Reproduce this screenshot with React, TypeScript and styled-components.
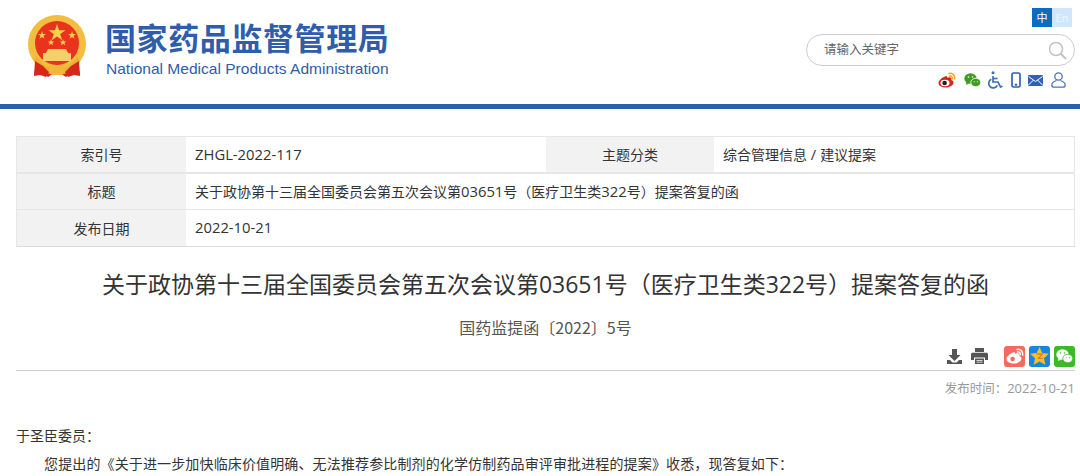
import React from "react";
import styled, { createGlobalStyle } from "styled-components";

const GlobalStyle = createGlobalStyle`
  html, body {
    margin: 0;
    padding: 0;
    background: #fff;
    overflow: hidden;
  }
  body {
    font-family: "Liberation Sans", "Noto Sans CJK SC", sans-serif;
    color: #333;
    text-spacing-trim: space-all;
  }
`;

const cjk = `"Noto Sans CJK SC", sans-serif`;

const Page = styled.div`
  width: 1080px;
  height: 476px;
  overflow: hidden;
`;

const Header = styled.header`
  height: 104px;
  border-bottom: 5px solid #2f5cab;
  display: flex;
  justify-content: space-between;
`;

const Brand = styled.div`
  display: flex;
  align-items: flex-start;
  padding: 15px 0 0 27px;
  gap: 19px;
`;

const BrandText = styled.div`
  display: flex;
  flex-direction: column;
  padding-top: 4px;
`;

const BrandCn = styled.div`
  font-family: ${cjk};
  font-size: 31px;
  font-weight: 700;
  line-height: 36px;
  letter-spacing: 0.6px;
  margin-left: -1px;
  color: #2f5cab;
  white-space: nowrap;
`;

const BrandEn = styled.div`
  font-family: "Liberation Sans", sans-serif;
  font-size: 15.55px;
  line-height: 18px;
  margin-top: 5px;
  color: #2f5cab;
  white-space: nowrap;
`;

const Tools = styled.div`
  width: 274px;
  display: flex;
  flex-direction: column;
  align-items: flex-end;
  padding: 8px 0 0;
`;

const LangSwitch = styled.div`
  display: flex;
  margin-right: 8px;
`;

const LangItem = styled.span<{ $active?: boolean }>`
  width: 20px;
  height: 19px;
  font-family: ${cjk};
  font-size: 11px;
  line-height: 19px;
  text-align: center;
  background: ${(p) => (p.$active ? "#0b6cc0" : "#cfe6fb")};
  color: ${(p) => (p.$active ? "#fff" : "#eef6fd")};
`;

const SearchBox = styled.div`
  width: 269px;
  height: 32px;
  margin: 7px 5px 0 0;
  box-sizing: border-box;
  border: 1px solid #ccc;
  border-radius: 16px;
  display: flex;
  align-items: center;
  justify-content: space-between;
  padding: 0 7px 0 17px;
`;

const SearchHint = styled.span`
  margin-top: -3px;
  font-family: ${cjk};
  font-size: 12.5px;
  color: #666;
`;

const IconRow = styled.div`
  display: flex;
  align-items: center;
  margin: 5px 14px 0 0;
  gap: 7.6px;
`;

const Content = styled.main`
  padding: 27px 5px 0 16px;
`;

const InfoTable = styled.div`
  border: 1px solid #e6e6e6;
  border-bottom-color: #dcdcdc;
  display: grid;
  grid-template-columns: 169px 360px 168px 1fr;
  grid-template-rows: 35px 2px 35px 1px 36px;
  font-family: ${cjk};
  font-size: 14px;
  color: #333;
`;

const Label = styled.div`
  display: flex;
  align-items: center;
  justify-content: center;
  padding-bottom: 1px;
  background: #f2f2f2;
`;

const Value = styled.div<{ $wide?: boolean }>`
  display: block;
  line-height: 35px;
  padding-left: 9px;
  grid-column: ${(p) => (p.$wide ? "span 3" : "auto")};
  white-space: pre;
`;

const Divider = styled.div`
  grid-column: 1 / -1;
  background: #e6e6e6;
`;

const Latin = styled.span`
  font-family: "Open Sans", "Noto Sans", sans-serif;
`;

const CellLatin = styled(Latin)`
  font-size: 14.8px;
`;

const TimeLatin = styled(Latin)`
  font-size: 13px;
`;

const ArticleTitle = styled.h1`
  margin: 20px 0 0;
  font-family: ${cjk};
  font-size: 23px;
  font-weight: 400;
  line-height: 33px;
  text-align: center;
  color: #333;
  white-space: nowrap;
`;

const DocNumber = styled.div`
  margin-top: 15px;
  font-family: ${cjk};
  font-size: 16px;
  line-height: 22px;
  text-align: center;
  color: #555;
`;

const ShareBar = styled.div`
  display: flex;
  justify-content: flex-end;
  align-items: center;
  height: 24px;
  margin-top: 6px;
  padding-bottom: 2px;
  border-bottom: 1px solid #ccc;
`;

const ShareGap = styled.span<{ $width: number }>`
  width: ${(p) => p.$width}px;
`;

const ShareButton = styled.span<{ $bg: string }>`
  width: 21px;
  height: 21px;
  margin-left: 4px;
  border-radius: 3px;
  background: ${(p) => p.$bg};
  display: flex;
  align-items: center;
  justify-content: center;
`;

const PublishTime = styled.div`
  margin-top: 7px;
  text-align: right;
  font-family: ${cjk};
  font-size: 12.5px;
  line-height: 20px;
  color: #999;
`;

const Salutation = styled.p`
  margin: 27px 0 0;
  font-family: ${cjk};
  font-size: 14px;
  line-height: 20px;
  color: #333;
`;

const Paragraph = styled.p`
  margin: 8px 0 0;
  text-indent: 28px;
  font-family: ${cjk};
  font-size: 14px;
  letter-spacing: 0.137px;
  line-height: 20px;
  color: #333;
  white-space: nowrap;
`;

const Emblem = () => (
  <svg width="60" height="64" viewBox="0 0 60 64">
    <path d="M10 44 L7 60 L16 58 L21 62 L30 56 L39 62 L44 58 L53 60 L50 44 Z" fill="#d5281b" />
    <circle cx="30" cy="29" r="29" fill="#f3bd3f" />
    <circle cx="30" cy="28" r="22" fill="#e8331f" />
    <path d="M30 9l2 6.2h6.500l-5.300 3.800 2 6.200-5.200-3.800-5.200 3.800 2-6.200-5.300-3.800h6.500z" fill="#f8d24f" />
    <path d="M15 16l1 3h3l-2.500 1.800 1 3-2.500-1.800-2.500 1.800 1-3L11 19h3zM45 16l1 3h3l-2.500 1.800 1 3-2.500-1.800-2.500 1.800 1-3L41 19h3zM24 24l.8 2.400h2.600l-2 1.500.8 2.400-2.200-1.500-2.200 1.500.8-2.400-2-1.500h2.600zM36 24l.8 2.400h2.600l-2 1.500.8 2.400-2.200-1.500-2.200 1.500.8-2.400-2-1.500h2.600z" fill="#f6cb4a" />
    <path d="M21 34h18l2 4h3v8H16v-8h3z" fill="#f6cf6a" />
    <path d="M10 41c4 9 12 13 20 13s16-4 20-13l3 5c-4 8-13 14-23 14S11 54 7 46z" fill="#eeb02f" />
    <path d="M22 50h16v6l-4 4h-8l-4-4z" fill="#f0b838" />
    <path d="M8 46l8 5 6 6-3 5-6-2-6 1zM52 46l-8 5-6 6 3 5 6-2 6 1z" fill="#d5281b" />
  </svg>
);

const SearchIcon = () => (
  <svg width="19" height="19" viewBox="0 0 19 19" fill="none" stroke="#c4c4c4" strokeWidth="1.500">
    <circle cx="8" cy="8" r="6.500" />
    <path d="M12.800 12.800L18 18" strokeWidth="2" />
  </svg>
);

const Weibo = ({ body = "#d9261c", eye = "#222", wave = "#f0a020" }) => (
  <svg width="18" height="16" viewBox="0 0 18 16">
    <path d="M7 4.500C3.500 6 .5 8.500.5 11c0 2.800 3.500 4.500 7.300 4.500 4.300 0 7.700-2.500 7.700-5 0-1.500-1.400-2.100-2.200-2.400.6-1.500.1-2.500-1.100-2.700-1.100-.2-3 .5-3 .5s.3-1.200-.3-1.600C8.300 4 7.700 4.200 7 4.500z" fill={body} />
    <ellipse cx="7" cy="11" rx="4.500" ry="3.300" fill="#fff" />
    <circle cx="6.600" cy="11" r="2.300" fill={eye} />
    <path d="M11 1.500c3.500-.8 6.300 2 5.700 5.500M11.500 4c1.800-.4 3.100 1 2.800 2.700" fill="none" stroke={wave} strokeWidth="1.500" strokeLinecap="round" />
  </svg>
);

const Wechat = ({ back = "#3f9e1f", front = "#3f9e1f", gap = "#fff", size = 17 }) => (
  <svg width={size} height={size * 0.88} viewBox="0 0 17 15">
    <ellipse cx="6.500" cy="5.500" rx="6.200" ry="5.200" fill={back} />
    <path d="M2.500 9l-.5 3 3-1.500z" fill={back} />
    <ellipse cx="11.800" cy="9.500" rx="5" ry="4.200" fill={front} stroke={gap} strokeWidth="0.800" />
    <circle cx="4.500" cy="4" r=".8" fill={gap} />
    <circle cx="8.500" cy="4" r=".8" fill={gap} />
    <circle cx="10.200" cy="8.800" r=".6" fill={gap} />
    <circle cx="13.400" cy="8.800" r=".6" fill={gap} />
  </svg>
);

const Accessible = () => (
  <svg width="15" height="18" viewBox="0 0 15 18" fill="none" stroke="#3f6fb5" strokeWidth="1.700">
    <circle cx="5" cy="1.800" r="1.500" fill="#3f6fb5" stroke="none" />
    <path d="M5 5v6h5l2.500 5 2-.8" />
    <path d="M5 7.500h4.500" />
    <path d="M3.300 8.300a4.500 4.500 0 1 0 6 6" />
  </svg>
);

const Phone = () => (
  <svg width="10" height="16" viewBox="0 0 10 16">
    <rect x="1" y="1" width="8" height="14" rx="1.500" fill="none" stroke="#2f62b5" strokeWidth="1.700" />
    <rect x="3.700" y="11.800" width="2.600" height="2" rx=".8" fill="#2f62b5" />
  </svg>
);

const Mail = () => (
  <svg width="15" height="11" viewBox="0 0 15 11">
    <rect width="15" height="11" rx="1.200" fill="#2f62b5" />
    <path d="M.5 1.500l7 5 7-5M.5 10l5-5M14.500 10l-5-5" fill="none" stroke="#fff" strokeWidth="1" />
  </svg>
);

const User = () => (
  <svg width="15" height="16" viewBox="0 0 15 16" fill="none" stroke="#4a74bd" strokeWidth="1.300">
    <circle cx="7.500" cy="4.500" r="3.700" />
    <path d="M5.500 8.500C2.500 9.500.8 11 .8 13c0 1.500 1 2.200 2.200 2.200h9c1.200 0 2.200-.7 2.200-2.200 0-2-1.700-3.500-4.700-4.500" />
  </svg>
);

const DownloadIcon = () => (
  <svg width="17" height="17" viewBox="0 0 17 17" fill="#555">
    <path d="M6 1h5v6h3.500l-6 6-6-6H6z" />
    <path d="M1 12h3l2.500 2.500h4L13 12h3v4H1z" />
  </svg>
);

const PrintIcon = () => (
  <svg width="17" height="16" viewBox="0 0 17 16" fill="#555">
    <path d="M4 0h9v4H4z" />
    <path d="M1.500 4.800h14c.8 0 1.500.7 1.500 1.500V12h-3V9.500H3V12H0V6.300c0-.8.700-1.500 1.500-1.500z" />
    <path d="M4 10.500h9V16H4z" />
    <path d="M5.500 12h6v.8h-6zM5.500 13.700h6v.8h-6z" fill="#fff" />
  </svg>
);

const QzoneStar = () => (
  <svg width="19" height="18" viewBox="0 0 19 18">
    <path d="M9.500 0l2.800 6 6.500.8-4.800 4.400 1.300 6.500-5.800-3.300-5.800 3.300 1.300-6.500L.2 6.800 6.700 6z" fill="#f8c21c" />
    <path d="M6.500 7h6l-4 4.300h4.500" fill="none" stroke="#d9822b" strokeWidth="1.300" />
  </svg>
);

export default function App() {
  return (
    <Page>
      <GlobalStyle />
      <Header>
        <Brand>
          <Emblem />
          <BrandText>
            <BrandCn>国家药品监督管理局</BrandCn>
            <BrandEn>National Medical Products Administration</BrandEn>
          </BrandText>
        </Brand>
        <Tools>
          <LangSwitch>
            <LangItem $active>中</LangItem>
            <LangItem>En</LangItem>
          </LangSwitch>
          <SearchBox>
            <SearchHint>请输入关键字</SearchHint>
            <SearchIcon />
          </SearchBox>
          <IconRow>
            <Weibo />
            <Wechat />
            <Accessible />
            <Phone />
            <Mail />
            <User />
          </IconRow>
        </Tools>
      </Header>
      <Content>
        <InfoTable>
          <Label>索引号</Label>
          <Value><CellLatin>ZHGL-2022-117</CellLatin></Value>
          <Label>主题分类</Label>
          <Value>综合管理信息<CellLatin> / </CellLatin>建议提案</Value>
          <Divider />
          <Label>标题</Label>
          <Value $wide>关于政协第十三届全国委员会第五次会议第<CellLatin>03651</CellLatin>号（医疗卫生类<CellLatin>322</CellLatin>号）提案答复的函</Value>
          <Divider />
          <Label>发布日期</Label>
          <Value $wide><CellLatin>2022-10-21</CellLatin></Value>
        </InfoTable>
        <ArticleTitle>关于政协第十三届全国委员会第五次会议第<Latin>03651</Latin>号（医疗卫生类<Latin>322</Latin>号）提案答复的函</ArticleTitle>
        <DocNumber>国药监提函〔2022〕5号</DocNumber>
        <ShareBar>
          <DownloadIcon />
          <ShareGap $width={8} />
          <PrintIcon />
          <ShareGap $width={12} />
          <ShareButton $bg="#f5695f"><Weibo body="#fff" eye="#f5695f" wave="#fff" /></ShareButton>
          <ShareButton $bg="#1b84dc"><QzoneStar /></ShareButton>
          <ShareButton $bg="#3fb72d"><Wechat back="#fff" front="#fff" gap="#3fb72d" /></ShareButton>
        </ShareBar>
        <PublishTime>发布时间：<TimeLatin>2022-10-21</TimeLatin></PublishTime>
        <Salutation>于圣臣委员：</Salutation>
        <Paragraph>您提出的《关于进一步加快临床价值明确、无法推荐参比制剂的化学仿制药品审评审批进程的提案》收悉，现答复如下：</Paragraph>
      </Content>
    </Page>
  );
}
